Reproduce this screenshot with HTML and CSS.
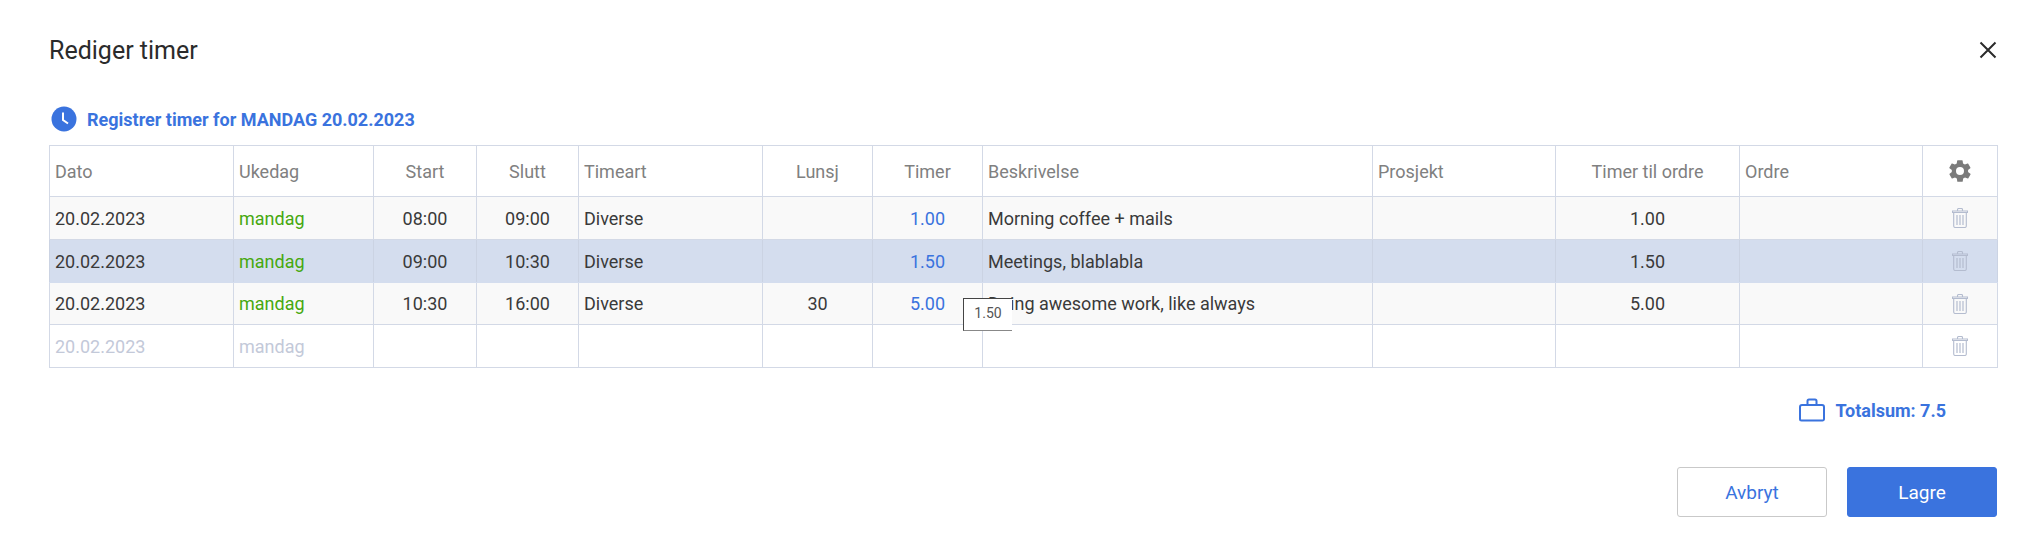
FILE: index.html
```html
<!DOCTYPE html>
<html lang="no">
<head>
   <meta charset="UTF-8">
   <title>Rediger timer</title>
   <link rel="stylesheet" href="styles.css">
</head>
<body>
   <div class="dialog">
      <div class="dialog-head">
         <h1 class="dialog-title">Rediger timer</h1>
         <svg class="close-icon" viewBox="0 0 18 18" width="18" height="18">
            <path d="M1.500 1.500 L16.500 16.500 M16.500 1.500 L1.500 16.500" fill="none" stroke="#2b2b2b" stroke-width="2"/>
         </svg>
      </div>

      <div class="reg-title">
         <svg class="clock-icon" viewBox="0 0 26 26" width="26" height="26">
            <circle cx="13" cy="13" r="12.5" fill="#3a73de"/>
            <path d="M12 6.5 V14 L17 17.5" fill="none" stroke="#fff" stroke-width="2"/>
         </svg>
         <span>Registrer timer for MANDAG 20.02.2023</span>
      </div>

      <table class="hours">
         <colgroup>
            <col class="c-date"><col class="c-day"><col class="c-start"><col class="c-end">
            <col class="c-type"><col class="c-lunch"><col class="c-hours"><col class="c-desc">
            <col class="c-proj"><col class="c-ohours"><col class="c-order"><col class="c-act">
         </colgroup>
         <thead>
            <tr>
               <th>Dato</th>
               <th>Ukedag</th>
               <th class="mid">Start</th>
               <th class="mid">Slutt</th>
               <th>Timeart</th>
               <th class="mid">Lunsj</th>
               <th class="mid">Timer</th>
               <th>Beskrivelse</th>
               <th>Prosjekt</th>
               <th class="mid">Timer til ordre</th>
               <th>Ordre</th>
               <th class="mid">
                  <svg class="gear-icon" viewBox="0 0 24 24" width="26" height="26">
                     <path fill="#7b7b7b" fill-rule="evenodd" d="M19.4 13c.1-.3.1-.7.1-1s0-.7-.1-1l2.1-1.6c.2-.2.2-.4.1-.6l-2-3.5c-.1-.2-.4-.3-.6-.2l-2.5 1c-.5-.4-1.1-.7-1.7-1L14.400 2.400c0-.2-.2-.4-.5-.4h-4c-.2 0-.4.2-.5.4L9 5.100c-.6.2-1.100.6-1.700 1l-2.500-1c-.2-.1-.5 0-.6.2l-2 3.500c-.1.2-.1.5.1.6L4.500 11c0 .3-.1.7-.1 1s0 .7.1 1l-2.100 1.600c-.2.200-.2.400-.1.600l2 3.500c.1.200.4.300.6.200l2.500-1c.5.400 1.100.700 1.700 1l.4 2.700c0 .2.2.4.5.4h4c.2 0 .4-.2.5-.4l.4-2.700c.6-.2 1.200-.6 1.700-1l2.500 1c.2.100.5 0 .6-.2l2-3.500c.1-.2.1-.4-.1-.6L19.400 13zM12 15.700a3.700 3.700 0 1 1 0-7.400 3.700 3.700 0 0 1 0 7.400z"/>
                  </svg>
               </th>
            </tr>
         </thead>
         <tbody>
            <tr class="row-a">
               <td>20.02.2023</td>
               <td class="day">mandag</td>
               <td class="mid">08:00</td>
               <td class="mid">09:00</td>
               <td>Diverse</td>
               <td class="mid"></td>
               <td class="mid num">1.00</td>
               <td>Morning coffee + mails</td>
               <td></td>
               <td class="mid">1.00</td>
               <td></td>
               <td class="mid">
                  <svg class="trash-icon" viewBox="0 0 16 20" width="16" height="20"><use href="#trash"/></svg>
               </td>
            </tr>
            <tr class="row-sel">
               <td>20.02.2023</td>
               <td class="day">mandag</td>
               <td class="mid">09:00</td>
               <td class="mid">10:30</td>
               <td>Diverse</td>
               <td class="mid"></td>
               <td class="mid num">1.50</td>
               <td>Meetings, blablabla</td>
               <td></td>
               <td class="mid">1.50</td>
               <td></td>
               <td class="mid">
                  <svg class="trash-icon" viewBox="0 0 16 20" width="16" height="20"><use href="#trash"/></svg>
               </td>
            </tr>
            <tr class="row-a row-c">
               <td>20.02.2023</td>
               <td class="day">mandag</td>
               <td class="mid">10:30</td>
               <td class="mid">16:00</td>
               <td>Diverse</td>
               <td class="mid">30</td>
               <td class="mid num">5.00</td>
               <td>Doing awesome work, like always</td>
               <td></td>
               <td class="mid">5.00</td>
               <td></td>
               <td class="mid">
                  <svg class="trash-icon" viewBox="0 0 16 20" width="16" height="20"><use href="#trash"/></svg>
               </td>
            </tr>
            <tr class="row-new">
               <td>20.02.2023</td>
               <td>mandag</td>
               <td></td>
               <td></td>
               <td></td>
               <td></td>
               <td></td>
               <td></td>
               <td></td>
               <td></td>
               <td></td>
               <td class="mid">
                  <svg class="trash-icon" viewBox="0 0 16 20" width="16" height="20"><use href="#trash"/></svg>
               </td>
            </tr>
         </tbody>
      </table>

      <div class="total">
         <svg class="case-icon" viewBox="0 0 26 24" width="26" height="24">
            <path d="M1 9 a2 2 0 0 1 2-2 H23 a2 2 0 0 1 2 2 V21 a1.500 1.500 0 0 1-1.500 1.500 H2.500 A1.500 1.500 0 0 1 1 21 Z M8.500 7 V3 a1.500 1.500 0 0 1 1.500-1.500 H16 a1.500 1.500 0 0 1 1.500 1.500 V7" fill="none" stroke="#3a73de" stroke-width="2"/>
         </svg>
         <span>Totalsum: 7.5</span>
      </div>

      <div class="actions">
         <button class="btn btn-cancel">Avbryt</button>
         <button class="btn btn-save">Lagre</button>
      </div>

      <div class="cell-tip">1.50</div>
   </div>

   <svg class="defs" width="0" height="0">
      <symbol id="trash" viewBox="0 0 16 20">
         <path d="M5.500 2.500 V1.500 a1 1 0 0 1 1-1 h3 a1 1 0 0 1 1 1 V2.500 M.5 3 h15 v1.500 h-15 Z M1.700 4.500 V18 a1.500 1.500 0 0 0 1.500 1.500 h9.600 a1.500 1.500 0 0 0 1.500-1.500 V4.500" fill="none" stroke="#b4bccf" stroke-width="1.100"/>
         <path d="M5 7 V17 M8 7 V17 M11 7 V17" fill="none" stroke="#b4bccf" stroke-width="1.200"/>
      </symbol>
   </svg>
</body>
</html>
```

FILE: styles.css
```css
* {
   box-sizing: border-box;
}

html, body {
   margin: 0;
   padding: 0;
   background: #fff;
}

body {
   font-family: Roboto, "Liberation Sans", sans-serif;
   font-size: 18px;
   color: #3a3a3a;
}

.dialog {
   position: relative;
   width: 2044px;
   height: 556px;
   padding: 34px 47px 0 49px;
}

.dialog-head {
   display: flex;
   justify-content: space-between;
   align-items: center;
   height: 32px;
}

.dialog-title {
   margin: 0;
   font-size: 25px;
   font-weight: 400;
   color: #2b2b2b;
}

.reg-title {
   display: flex;
   align-items: center;
   gap: 10px;
   margin-top: 40px;
   height: 26px;
   padding-left: 2px;
   font-weight: 700;
   color: #3a73de;
}

.hours {
   width: 1948px;
   margin-top: 13px;
   border-collapse: collapse;
   table-layout: fixed;
}

.c-date { width: 184px; }
.c-day { width: 140px; }
.c-start { width: 103px; }
.c-end { width: 102px; }
.c-type { width: 184px; }
.c-lunch { width: 110px; }
.c-hours { width: 110px; }
.c-desc { width: 390px; }
.c-proj { width: 183px; }
.c-ohours { width: 184px; }
.c-order { width: 183px; }
.c-act { width: 75px; }

.hours th,
.hours td {
   border: 1px solid #d3d9e6;
   padding: 0 5px;
   text-align: left;
   font-weight: 400;
   white-space: nowrap;
}

.hours th {
   height: 51px;
   color: #808080;
}

.hours td {
   height: 43px;
}

.hours .mid {
   text-align: center;
}

.gear-icon,
.trash-icon {
   display: block;
   margin: 0 auto;
}

.row-a td {
   background: #f9f9f9;
}

.row-sel td {
   background: #d4ddee;
   border-top-color: #d4ddee;
   border-bottom-color: #d4ddee;
   border-left-color: #cbd3e3;
   border-right-color: #cbd3e3;
}

.row-c td {
   height: 42px;
}

.row-new td {
   color: #c3c9d9;
}

.day {
   color: #46a80f;
}

.num {
   color: #3a73de;
}

.total {
   display: flex;
   justify-content: flex-end;
   align-items: center;
   gap: 10px;
   width: 1948px;
   height: 24px;
   margin-top: 30px;
   padding-right: 51px;
   font-weight: 700;
   color: #3a73de;
}

.actions {
   display: flex;
   justify-content: flex-end;
   gap: 20px;
   margin-top: 45px;
}

.btn {
   width: 150px;
   height: 50px;
   border-radius: 3px;
   font-family: inherit;
   font-size: 19px;
}

.btn-cancel {
   background: #fff;
   border: 1px solid #c9c9c9;
   color: #3a73de;
}

.btn-save {
   background: #3a73de;
   border: 1px solid #3a73de;
   color: #fff;
}

.cell-tip {
   position: absolute;
   left: 963px;
   top: 298px;
   width: 49px;
   height: 33px;
   padding-top: 6px;
   text-align: center;
   font-size: 14px;
   color: #555;
   background: #fff;
   border-left: 1px solid #444;
   border-top: 1px solid #444;
   border-bottom: 1px solid #888;
}

.defs {
   position: absolute;
}
```
